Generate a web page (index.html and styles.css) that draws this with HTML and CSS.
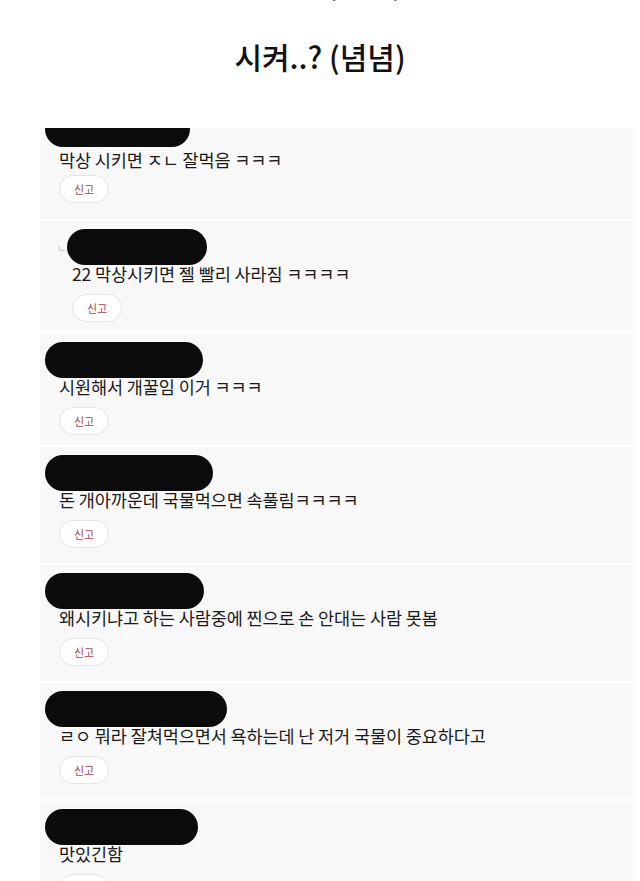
FILE: index.html
```html
<!DOCTYPE html>
<html>
<head>
  <title>시켜..? (념념)</title>
  <link rel="stylesheet" href="styles.css">
</head>
<body>
  <header class="caption">
    <p class="caption-prev">순댓국 (냠냠)</p>
    <h1 class="caption-title">시켜..? (념념)</h1>
  </header>
  <main class="comments">
    <div class="comment first">
      <div class="redact" style="width: 145px"></div>
      <p class="comment-text">막상 시키면 ㅈㄴ 잘먹음 ㅋㅋㅋ</p>
      <button class="report">신고</button>
    </div>
    <div class="comment reply tight">
      <span class="reply-mark">ㄴ</span>
      <div class="reply-body">
        <div class="redact" style="width: 140px"></div>
        <p class="comment-text">22 막상시키면 젤 빨리 사라짐 ㅋㅋㅋㅋ</p>
        <button class="report">신고</button>
      </div>
    </div>
    <div class="comment tight">
      <div class="redact" style="width: 158px"></div>
      <p class="comment-text">시원해서 개꿀임 이거 ㅋㅋㅋ</p>
      <button class="report">신고</button>
    </div>
    <div class="comment">
      <div class="redact" style="width: 168px"></div>
      <p class="comment-text">돈 개아까운데 국물먹으면 속풀림ㅋㅋㅋㅋ</p>
      <button class="report">신고</button>
    </div>
    <div class="comment">
      <div class="redact" style="width: 159px"></div>
      <p class="comment-text">왜시키냐고 하는 사람중에 찐으로 손 안대는 사람 못봄</p>
      <button class="report">신고</button>
    </div>
    <div class="comment">
      <div class="redact" style="width: 182px"></div>
      <p class="comment-text">ㄹㅇ 뭐라 잘쳐먹으면서 욕하는데 난 저거 국물이 중요하다고</p>
      <button class="report">신고</button>
    </div>
    <div class="comment">
      <div class="redact" style="width: 153px"></div>
      <p class="comment-text">맛있긴함</p>
      <button class="report">신고</button>
    </div>
  </main>
</body>
</html>
```
FILE: styles.css
```css
* {
  box-sizing: border-box;
  margin: 0;
  padding: 0;
}
body {
  font-family: "Noto Sans CJK KR", "Noto Sans", sans-serif;
  background-color: #fff;
  color: #1a1a1a;
  overflow: hidden;
}
.caption {
  text-align: center;
  font-size: 30px;
  font-weight: 500;
  line-height: 40px;
  color: #111;
}
.caption-prev {
  margin-top: -38px;
}
.caption-title {
  font-size: 30px;
  font-weight: 500;
  margin-top: 34px;
}
.comments {
  margin: 52px 7px 0 40px;
  background-color: #f8f8f8;
}
.comment {
  padding: 8px 18px 15px 19px;
  border-top: 2px solid #fefefe;
}
.comment.tight {
  padding-bottom: 10px;
}
.comment.first {
  border-top: none;
  padding-top: 0;
  padding-bottom: 16px;
  overflow: hidden;
}
.redact {
  height: 36px;
  margin-left: -14px;
  margin-bottom: -2px;
  background-color: #0b0b0b;
  border-radius: 18px;
}
.first .redact {
  margin-top: -17px;
  margin-bottom: 2px;
}
.comment-text {
  font-size: 17.5px;
  line-height: 22px;
  letter-spacing: -0.1px;
}
.report {
  display: block;
  width: 50px;
  height: 28px;
  margin-top: 9px;
  background-color: #fff;
  border: 1px solid #e4e4e4;
  border-radius: 14px;
  font-family: inherit;
  font-size: 11px;
  color: #a8474c;
}
.first .report {
  margin-top: 4px;
}
.reply {
  display: flex;
  padding-left: 17px;
}
.reply-mark {
  font-size: 10px;
  line-height: 10px;
  color: #c4c4c4;
  margin-top: 14px;
  width: 15px;
}
.reply-body .redact {
  margin-left: -5px;
}
```
